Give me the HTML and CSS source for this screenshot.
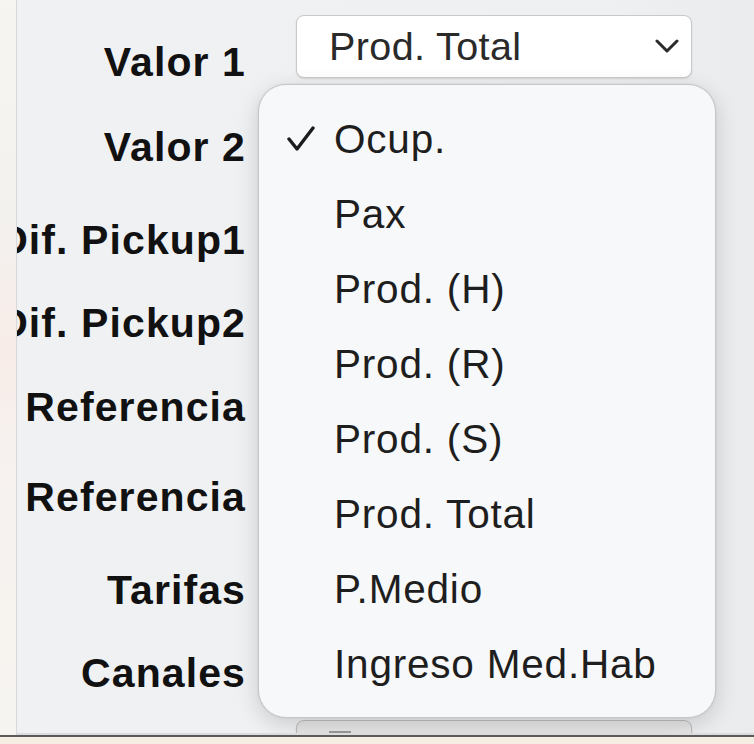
FILE: index.html
```html
<!DOCTYPE html>
<html lang="es">
<head>
    <meta charset="UTF-8">
    <meta name="viewport" content="width=device-width, initial-scale=1.0">
    <title>Valores</title>
    <link rel="stylesheet" href="styles.css">
</head>
<body>
    <div class="page">
        <div class="main">
            <div class="side"></div>
            <div class="panel">
                <div class="form">
                    <div class="label">Valor 1</div>
                    <div class="field field--first">
                        <div class="select">
                            <span>Prod. Total</span>
                            <svg class="chevron" width="24" height="14" viewBox="0 0 24 14">
                                <path d="M2 2 L12 12 L22 2" fill="none" stroke="#2a2a2a" stroke-width="3" stroke-linecap="round" stroke-linejoin="round"/>
                            </svg>
                        </div>
                    </div>
                    <div class="label">Valor 2</div>
                    <div class="field"></div>
                    <div class="label">Dif. Pickup1</div>
                    <div class="field"></div>
                    <div class="label">Dif. Pickup2</div>
                    <div class="field"></div>
                    <div class="label">Referencia</div>
                    <div class="field"></div>
                    <div class="label">Referencia</div>
                    <div class="field"></div>
                    <div class="label">Tarifas</div>
                    <div class="field"></div>
                    <div class="label">Canales</div>
                    <div class="field"></div>
                    <div class="label"></div>
                    <div class="field">
                        <div class="select select--next"><span class="dash"></span></div>
                    </div>
                </div>

                <div class="menu">
                    <div class="item item--checked">
                        <svg class="check" width="28" height="26" viewBox="0 0 28 26">
                            <path d="M2 13 L10 23 L26 2" fill="none" stroke="#1c1c1c" stroke-width="3.4" stroke-linecap="round" stroke-linejoin="round"/>
                        </svg>
                        Ocup.
                    </div>
                    <div class="item">Pax</div>
                    <div class="item">Prod. (H)</div>
                    <div class="item">Prod. (R)</div>
                    <div class="item">Prod. (S)</div>
                    <div class="item">Prod. Total</div>
                    <div class="item">P.Medio</div>
                    <div class="item">Ingreso Med.Hab</div>
                </div>
            </div>
        </div>
        <div class="footer"></div>
    </div>
</body>
</html>
```

FILE: styles.css
```css
*{
    padding: 0;
    margin: 0;
    box-sizing: border-box;
}
html, body{
    width: 754px;
    height: 744px;
    overflow: hidden;
}
body{
    background-color: #f6f4f0;
    font-family: "Liberation Sans", Arial, sans-serif;
    color: #111;
}
.page{
    display: flex;
    flex-direction: column;
    height: 744px;
}
.main{
    display: flex;
    height: 735px;
}
.side{
    width: 16px;
    background: linear-gradient(180deg, #f7f5f2 0%, #f3f1ee 30%, #f8ece8 48%, #f6f1ee 60%, #f6f4f0 100%);
}
.panel{
    flex: 1;
    position: relative;
    overflow: hidden;
    background: linear-gradient(90deg, #f0f1f3 0%, #eff0f2 80%, #e9ebed 100%);
    border-left: 1px solid #d8d8d8;
    border-bottom: 2px solid #dcdcdc;
}
.form{
    display: grid;
    grid-template-columns: 229px 396px;
    grid-template-rows: 85px 93px 83px 84px 90px 93px 83px 71px auto;
    column-gap: 50px;
    padding-top: 38px;
}
.label{
    height: 48px;
    line-height: 48px;
    text-align: right;
    display: flex;
    justify-content: flex-end;
    font-size: 41px;
    font-weight: bold;
    letter-spacing: 1.1px;
    white-space: nowrap;
}
.field{
    display: flex;
    align-items: flex-start;
}
.field--first{
    margin-top: -23px;
}
.select{
    width: 100%;
    height: 63px;
    display: flex;
    align-items: center;
    justify-content: space-between;
    padding: 0 12px 0 32px;
    background-color: #fff;
    border: 1px solid #c9c9c9;
    border-radius: 8px;
    box-shadow: 0 1px 2px rgba(0,0,0,0.12);
    font-size: 39.5px;
    letter-spacing: 0.4px;
    color: #2a2a2a;
}
.select--next{
    background-color: #e6e6e6;
    border-color: #bdbdbd;
    align-items: flex-start;
    padding-top: 10px;
}
.dash{
    width: 22px;
    height: 4px;
    background-color: #9a9a9a;
}
.chevron{
    margin-bottom: 2px;
}
.menu{
    position: absolute;
    left: 241px;
    top: 84px;
    width: 458px;
    height: 634px;
    padding-top: 17px;
    background-color: #f7f8f9;
    border: 1px solid #c6c6c6;
    border-radius: 28px;
    box-shadow: 0 6px 22px rgba(0,0,0,0.16), 0 0 2px rgba(0,0,0,0.1);
}
.item{
    height: 75px;
    display: flex;
    align-items: center;
    padding-left: 75px;
    position: relative;
    font-size: 40.5px;
    letter-spacing: 0.8px;
    color: #1e1e1e;
}
.check{
    position: absolute;
    left: 28px;
    top: 24px;
}
.footer{
    flex: 1;
    background-color: #f4efe2;
    border-top: 2px solid #5a5a5a;
}
```
